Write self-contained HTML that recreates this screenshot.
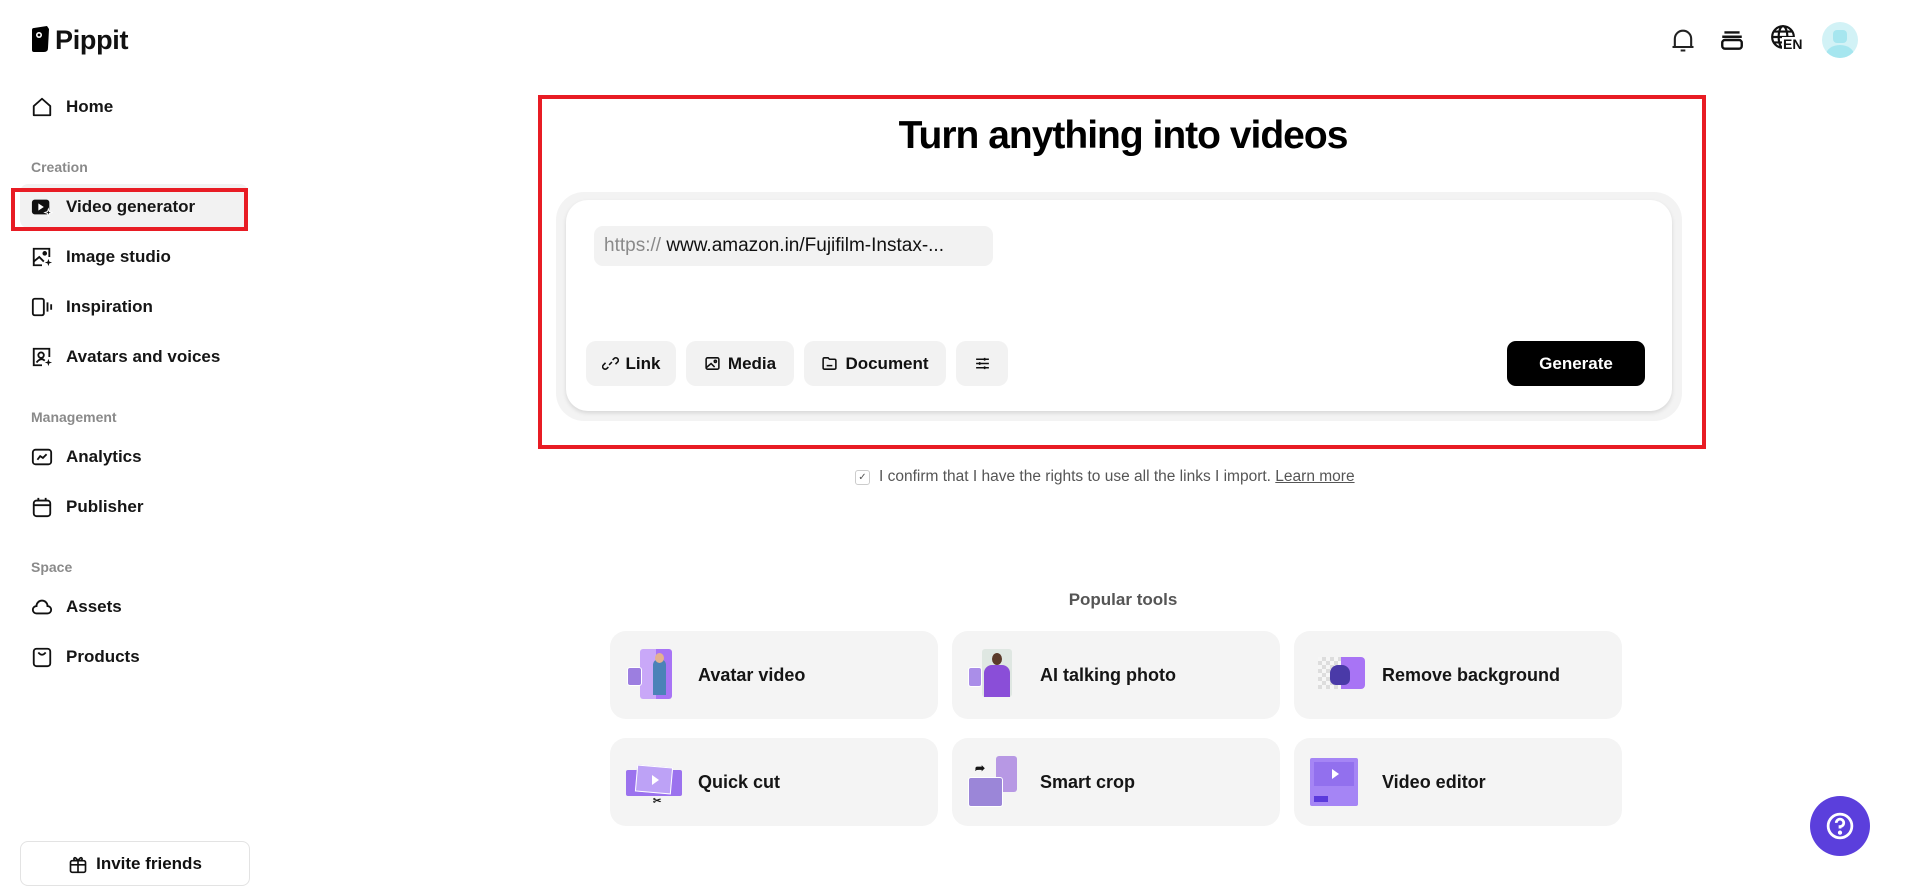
<!DOCTYPE html>
<html><head><meta charset="utf-8"><style>
*{box-sizing:border-box;margin:0;padding:0}
body{width:1919px;height:895px;background:#fff;font-family:"Liberation Sans",sans-serif;color:#111;position:relative;overflow:hidden}
.a{position:absolute}
.nav{position:absolute;left:31px;display:flex;align-items:center;font-size:17px;font-weight:bold;color:#151515;height:24px}
.nav svg{width:22px;height:22px;margin-right:13px;flex:none}
.sec{position:absolute;left:31px;font-size:14px;color:#8a8a8a;font-weight:bold}
.btn{position:absolute;top:341px;height:45px;background:#f2f2f2;border-radius:10px;display:flex;align-items:center;justify-content:center;font-size:17px;font-weight:bold;gap:7px}
.btn svg{width:17px;height:17px}
.card{position:absolute;width:328px;height:88px;background:#f4f4f4;border-radius:16px;display:flex;align-items:center;font-size:18px;font-weight:bold;color:#151515}
.card .ic{width:52px;height:52px;margin-left:16px;margin-right:20px;position:relative}
.card span{position:relative}
</style></head><body>
<!-- logo -->
<div class="a" style="left:32px;top:26px;width:17px;height:27px">
<svg width="17" height="27" viewBox="0 0 17 27"><path d="M2 2 L15 0 L17 3 L16 22 Q16 26 12 26 L2 26 Q0 26 0 24 L0 4 Q0 2 2 2Z" fill="#000"/><circle cx="7" cy="9" r="3" fill="#fff"/><circle cx="7" cy="9" r="1.4" fill="#000"/></svg></div>
<div class="a" style="left:55px;top:25px;font-size:27px;font-weight:bold;letter-spacing:-0.3px">Pippit</div>

<div class="nav" style="top:95px"><svg viewBox="0 0 24 24" fill="none" stroke="#111" stroke-width="2"><path d="M3 11 L12 3 L21 11 V21 H3Z" stroke-linejoin="round"/></svg>Home</div>
<div class="sec" style="top:159px">Creation</div>
<div class="a" style="left:20px;top:184px;width:228px;height:44px;background:#f2f2f2;border-radius:8px"></div>
<div class="a" style="left:11px;top:188px;width:237px;height:43px;border:4px solid #e81c24"></div>
<div class="nav" style="top:195px"><svg viewBox="0 0 24 24"><rect x="1" y="4" width="19" height="16" rx="3" fill="#111"/><path d="M8 8 L14 12 L8 16Z" fill="#fff"/><path d="M19 14 L20 17 L23 18 L20 19 L19 22 L18 19 L15 18 L18 17Z" fill="#111" stroke="#fff" stroke-width="1"/></svg>Video generator</div>
<div class="nav" style="top:245px"><svg viewBox="0 0 24 24" fill="none" stroke="#111" stroke-width="2"><path d="M20 12 V3 H3 V21 H12"/><path d="M3 17 L9 12 L14 17"/><circle cx="15" cy="8" r="1.5" fill="#111"/><path d="M19 14 L20 17 L23 18 L20 19 L19 22 L18 19 L15 18 L18 17Z" fill="#111" stroke="none"/></svg>Image studio</div>
<div class="nav" style="top:295px"><svg viewBox="0 0 24 24" fill="none" stroke="#111" stroke-width="2"><rect x="2" y="3" width="12" height="18" rx="2"/><path d="M18 7 V17 M22 9 V15"/></svg>Inspiration</div>
<div class="nav" style="top:345px"><svg viewBox="0 0 24 24" fill="none" stroke="#111" stroke-width="2"><path d="M20 12 V3 H3 V21 H12"/><circle cx="11" cy="10" r="3"/><path d="M6 18 Q11 12 15 16"/><path d="M19 14 L20 17 L23 18 L20 19 L19 22 L18 19 L15 18 L18 17Z" fill="#111" stroke="none"/></svg>Avatars and voices</div>
<div class="sec" style="top:409px">Management</div>
<div class="nav" style="top:445px"><svg viewBox="0 0 24 24" fill="none" stroke="#111" stroke-width="2"><rect x="2" y="4" width="20" height="16" rx="3"/><path d="M7 15 L10 11 L13 13 L17 9"/></svg>Analytics</div>
<div class="nav" style="top:495px"><svg viewBox="0 0 24 24" fill="none" stroke="#111" stroke-width="2"><rect x="3" y="5" width="18" height="17" rx="3"/><path d="M3 10 H21 M8 2 V6 M16 2 V6"/></svg>Publisher</div>
<div class="sec" style="top:559px">Space</div>
<div class="nav" style="top:595px"><svg viewBox="0 0 24 24" fill="none" stroke="#111" stroke-width="2"><path d="M6 19 H18 A4 4 0 0 0 18 11 A6 6 0 0 0 6 11 A4 4 0 0 0 6 19Z"/></svg>Assets</div>
<div class="nav" style="top:645px"><svg viewBox="0 0 24 24" fill="none" stroke="#111" stroke-width="2"><rect x="3" y="3" width="18" height="19" rx="3"/><path d="M8 7 Q12 12 16 7"/></svg>Products</div>
<div class="a" style="left:20px;top:841px;width:230px;height:45px;border:1px solid #e3e3e3;border-radius:8px;display:flex;align-items:center;justify-content:center;font-size:17px;font-weight:bold;gap:8px"><svg width="20" height="20" viewBox="0 0 24 24" fill="none" stroke="#111" stroke-width="2"><rect x="3" y="8" width="18" height="14" rx="2"/><path d="M3 13 H21 M12 8 V22 M12 8 Q8 2 7 6 Q7 8 12 8 Q16 2 17 6 Q17 8 12 8"/></svg>Invite friends</div>

<!-- top right -->
<svg class="a" style="left:1669px;top:26px" width="28" height="28" viewBox="0 0 24 24" fill="none" stroke="#222" stroke-width="1.8"><path d="M5 18 V11 A7 7 0 0 1 19 11 V18 M3 18 H21 M10 21 H14"/></svg>
<svg class="a" style="left:1719px;top:27px" width="26" height="26" viewBox="0 0 24 24" fill="none" stroke="#111" stroke-width="2.2"><path d="M5 5 H19 M3 9 H21"/><rect x="3" y="12" width="18" height="8" rx="2.5"/></svg>
<div class="a" style="left:1770px;top:24px;width:38px;height:32px">
<svg width="26" height="26" viewBox="0 0 24 24" fill="none" stroke="#111" stroke-width="2"><circle cx="12" cy="12" r="10"/><ellipse cx="12" cy="12" rx="4" ry="10"/><path d="M2 12 H22 M4 7 H20 M4 17 H20"/></svg>
<div class="a" style="left:12px;top:13px;font-size:14px;font-weight:bold;background:#fff;line-height:15px;padding-left:1px">EN</div></div>
<div class="a" style="left:1822px;top:22px;width:36px;height:36px;border-radius:50%;background:#d2f2f6;overflow:hidden"><div class="a" style="left:11px;top:8px;width:14px;height:13px;background:#a6e6ef;border-radius:4px"></div><div class="a" style="left:4px;top:23px;width:28px;height:20px;background:#a6e6ef;border-radius:50%"></div></div>

<!-- hero -->
<div class="a" style="left:538px;top:95px;width:1168px;height:354px;border:4px solid #e81c24"></div>
<div class="a" style="left:540px;top:114px;width:1166px;text-align:center;font-size:39px;font-weight:bold;letter-spacing:-1px;color:#000">Turn anything into videos</div>
<div class="a" style="left:556px;top:192px;width:1126px;height:229px;background:#f3f3f3;border-radius:28px"></div>
<div class="a" style="left:566px;top:200px;width:1106px;height:211px;background:#fff;border-radius:22px;box-shadow:0 2px 4px rgba(0,0,0,.12)"></div>
<div class="a" style="left:594px;top:226px;width:399px;height:40px;background:#f2f2f2;border-radius:9px;font-size:19px;line-height:40px;padding-left:10px;white-space:nowrap"><span style="color:#8a8a8a">https:// </span><span style="color:#111">www.amazon.in/Fujifilm-Instax-...</span></div>
<div class="btn" style="left:586px;width:90px"><svg viewBox="0 0 24 24" fill="none" stroke="#111" stroke-width="2.2"><path d="M10 14 L14 10 M9 17 L7 19 A3.5 3.5 0 0 1 2 14 L5 11 M15 7 L17 5 A3.5 3.5 0 0 1 22 10 L19 13"/></svg>Link</div>
<div class="btn" style="left:686px;width:108px"><svg viewBox="0 0 24 24" fill="none" stroke="#111" stroke-width="2.2"><rect x="3" y="4" width="18" height="16" rx="2"/><path d="M3 18 L10 12 L15 17"/><circle cx="16" cy="9" r="1.5"/></svg>Media</div>
<div class="btn" style="left:804px;width:142px"><svg viewBox="0 0 24 24" fill="none" stroke="#111" stroke-width="2.2"><path d="M3 6 Q3 4 5 4 H10 L12 6 H19 Q21 6 21 8 V18 Q21 20 19 20 H5 Q3 20 3 18Z M8 15 H16"/></svg>Document</div>
<div class="btn" style="left:956px;width:52px"><svg viewBox="0 0 24 24" fill="none" stroke="#111" stroke-width="2.2"><path d="M3 6 H21 M3 12 H21 M3 18 H21 M15 4 V8 M8 10 V14 M15 16 V20" /></svg></div>
<div class="a" style="left:1507px;top:341px;width:138px;height:45px;background:#000;color:#fff;border-radius:9px;font-size:17px;font-weight:bold;display:flex;align-items:center;justify-content:center">Generate</div>

<div class="a" style="left:855px;top:468px;height:18px;display:flex;align-items:center;font-size:15.5px;color:#555;white-space:nowrap"><span style="display:inline-block;width:15px;height:15px;border:1px solid #ccc;border-radius:3px;margin-right:9px;font-size:10px;line-height:13px;text-align:center;color:#555">✓</span>I confirm that I have the rights to use all the links I import.&nbsp;<u>Learn more</u></div>

<div class="a" style="left:540px;top:590px;width:1166px;text-align:center;font-size:17px;color:#555;font-weight:bold">Popular tools</div>

<div class="card" style="left:610px;top:631px"><div class="ic"><div class="a" style="left:14px;top:0;width:32px;height:50px;background:linear-gradient(90deg,#c9a8f8 50%,#a874f5 50%);border-radius:3px"></div><div class="a" style="left:27px;top:10px;width:13px;height:36px;background:#4b82b8;border-radius:6px 6px 0 0"></div><div class="a" style="left:29px;top:4px;width:9px;height:10px;background:#e4b18f;border-radius:50%"></div><div class="a" style="left:1px;top:18px;width:15px;height:19px;background:#9c7ee0;border:1.5px solid #fff;border-radius:3px"></div></div><span>Avatar video</span></div>
<div class="card" style="left:952px;top:631px"><div class="ic"><div class="a" style="left:14px;top:0;width:30px;height:48px;background:#dfe7e2;border-radius:3px"></div><div class="a" style="left:16px;top:16px;width:26px;height:32px;background:#8a4ed8;border-radius:8px 8px 0 0"></div><div class="a" style="left:24px;top:4px;width:10px;height:12px;background:#5b3a2a;border-radius:50%"></div><div class="a" style="left:0;top:18px;width:14px;height:20px;background:#aa8ee8;border:1.5px solid #fff;border-radius:3px"></div></div><span>AI talking photo</span></div>
<div class="card" style="left:1294px;top:631px"><div class="ic"><div class="a" style="left:8px;top:8px;width:24px;height:32px;background:repeating-conic-gradient(#ddd 0 25%,#f6f6f6 0 50%) 0 0/8px 8px"></div><div class="a" style="left:31px;top:8px;width:24px;height:32px;background:#a874f5;border-radius:0 4px 4px 0"></div><div class="a" style="left:20px;top:16px;width:20px;height:20px;background:#4a3aa8;border-radius:40% 40% 6px 6px"></div></div><span>Remove background</span></div>

<div class="card" style="left:610px;top:738px"><div class="ic"><div class="a" style="left:0;top:14px;width:56px;height:26px;background:#9b72ee;border-radius:2px"></div><div class="a" style="left:10px;top:10px;width:36px;height:27px;background:#bda2f6;border:1.5px solid #fff;transform:rotate(5deg)"></div><div class="a" style="left:26px;top:19px;width:0;height:0;border-left:7px solid #fff;border-top:5px solid transparent;border-bottom:5px solid transparent"></div><div class="a" style="left:27px;top:40px;font-size:10px">✂</div></div><span>Quick cut</span></div>
<div class="card" style="left:952px;top:738px"><div class="ic"><div class="a" style="left:28px;top:0;width:21px;height:36px;background:#b798e4;border-radius:3px"></div><div class="a" style="left:0;top:21px;width:35px;height:30px;background:#9b86d8;border:1.5px solid #fff;border-radius:3px"></div><div class="a" style="left:7px;top:5px;font-size:12px">➦</div></div><span>Smart crop</span></div>
<div class="card" style="left:1294px;top:738px"><div class="ic"><div class="a" style="left:0;top:2px;width:48px;height:48px;background:#a585f5;border-radius:2px"></div><div class="a" style="left:4px;top:6px;width:40px;height:24px;background:#9270ee"></div><div class="a" style="left:22px;top:13px;width:0;height:0;border-left:7px solid #fff;border-top:5px solid transparent;border-bottom:5px solid transparent"></div><div class="a" style="left:4px;top:40px;width:14px;height:6px;background:#5b3adc"></div></div><span>Video editor</span></div>

<div class="a" style="left:1810px;top:796px;width:60px;height:60px;border-radius:50%;background:#5b3fdc;display:flex;align-items:center;justify-content:center"><svg width="30" height="30" viewBox="0 0 24 24" fill="none" stroke="#fff" stroke-width="2.2"><circle cx="12" cy="12" r="9.5"/><path d="M9 9.5 A3 3 0 1 1 12 12.5 V14"/><circle cx="12" cy="17.3" r="0.6" fill="#fff"/></svg></div>
</body></html>
